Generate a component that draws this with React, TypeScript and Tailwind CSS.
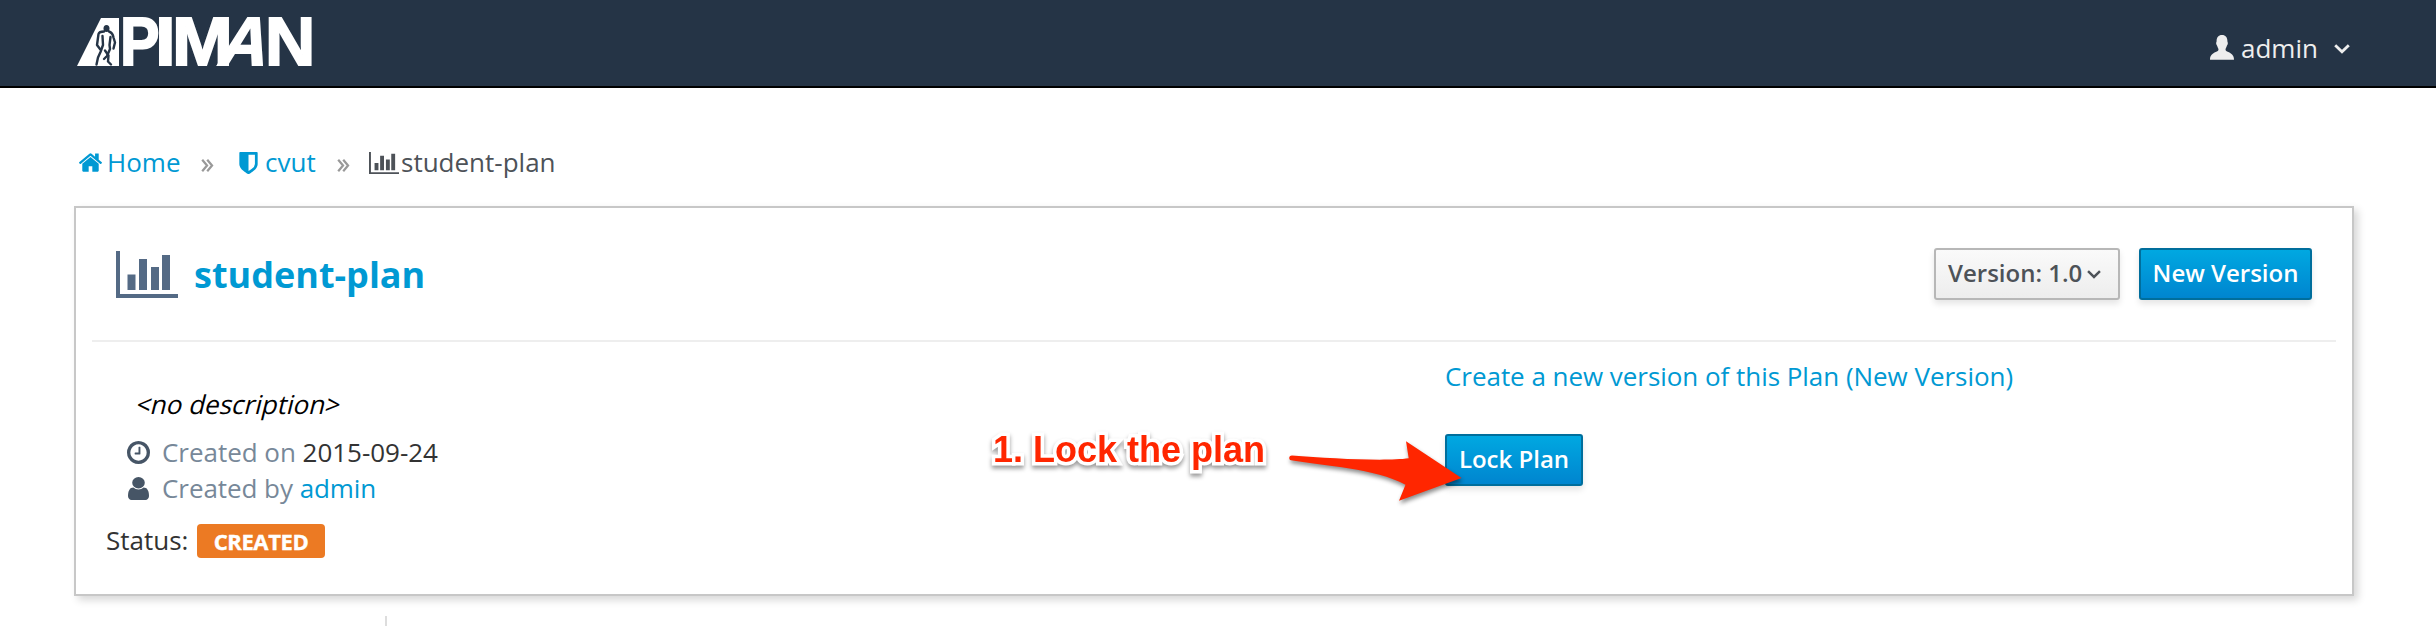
import React from "react";

function BarChart({ className }: { className: string }) {
  return (
    <svg className={className} viewBox="0 0 62 47" fill="currentColor" preserveAspectRatio="none">
      <path d="M0 0h4v43h58v4H0zM11.5 23.5h8v15.5h-8zM23 8h8v31h-8zM35 16h8v23h-8zM46 4h8v35h-8z" />
    </svg>
  );
}

function Home({ className }: { className: string }) {
  return (
    <svg className={className} viewBox="89 253 1614 1283" fill="currentColor">
      <path d="M1472 992v480q0 26-19 45t-45 19h-384v-384h-256v384h-384q-26 0-45-19t-19-45v-480q0-1 .5-3t.5-3l575-474 575 474q1 2 1 6zm223-69l-62 74q-8 9-21 11h-3q-13 0-21-7l-692-577-692 577q-12 8-24 7-13-2-21-11l-62-74q-8-10-7-23.5t11-21.5l719-599q32-26 76-26t76 26l244 204v-195q0-14 9-23t23-9h192q14 0 23 9t9 23v408l219 182q10 8 11 21.5t-7 23.5z" />
    </svg>
  );
}

function Shield({ className }: { className: string }) {
  return (
    <svg className={className} viewBox="256 128 1280 1536" fill="currentColor">
      <path d="M1344 960v-640h-448v1137q119-63 213-137 235-184 235-360zm192-768v768q0 86-33.5 170.5t-83 150-118 127.5-126.5 103-121 77.5-89.5 49.5-42.5 20q-12 6-26 6t-26-6q-16-7-42.5-20t-89.5-49.5-121-77.5-126.5-103-118-127.5-83-150-33.5-170.5v-768q0-26 19-45t45-19h1152q26 0 45 19t19 45z" />
    </svg>
  );
}

function Clock({ className }: { className: string }) {
  return (
    <svg className={className} viewBox="128 128 1536 1536" fill="currentColor">
      <path d="M1024 544v448q0 14-9 23t-23 9h-320q-14 0-23-9t-9-23v-64q0-14 9-23t23-9h224v-352q0-14 9-23t23-9h64q14 0 23 9t9 23zm416 352q0-148-73-273t-198-198-273-73-273 73-198 198-73 273 73 273 198 198 273 73 273-73 198-198 73-273zm224 0q0 209-103 385.5t-279.5 279.5-385.5 103-385.5-103-279.5-279.5-103-385.5 103-385.5 279.5-279.5 385.5-103 385.5 103 279.5 279.5 103 385.5z" />
    </svg>
  );
}

function User({ className }: { className: string }) {
  return (
    <svg className={className} viewBox="256 128 1280 1536" fill="currentColor" preserveAspectRatio="none">
      <path d="M1536 1399q0 109-62.5 187t-150.5 78h-854q-88 0-150.5-78t-62.5-187q0-85 8.5-160.5t31.5-152 58.5-131 94-89 134.5-34.5q131 128 313 128t313-128q76 0 134.5 34.5t94 89 58.5 131 31.5 152 8.5 160.5zm-256-887q0 159-112.5 271.5t-271.5 112.5-271.5-112.5-112.5-271.5 112.5-271.5 271.5-112.5 271.5 112.5 112.5 271.5z" />
    </svg>
  );
}

function Bust({ className }: { className: string }) {
  return (
    <svg className={className} viewBox="0 0 24 25" fill="currentColor">
      <path d="M12 0c3.6 0 5.4 2.6 5.4 6 0 1 .6 1.400.4 2.700-.2 1.200-.8 1.400-1 2.200-.4 1.700-1.300 2.300-1.300 3.400 0 1.500 1 2 2.800 2.800C21.500 18.600 24 20.200 24 24.800H0c0-4.600 2.500-6.200 5.700-7.700 1.800-.8 2.800-1.300 2.800-2.800 0-1.100-.9-1.700-1.300-3.400-.2-.8-.8-1-1-2.200C6 7.400 6.600 7 6.600 6 6.600 2.600 8.400 0 12 0z" />
    </svg>
  );
}

function Chevron({ className }: { className: string }) {
  return (
    <svg className={className} viewBox="0 0 16 10" fill="none" stroke="currentColor" strokeWidth="2.800" preserveAspectRatio="none">
      <path d="M1.200 1.200 8 7.800 14.800 1.200" />
    </svg>
  );
}

function Separator({ className }: { className: string }) {
  return (
    <svg className={className} viewBox="0 0 13 14" fill="none" stroke="currentColor" strokeWidth="2.400">
      <path d="M.8.8 6 7 .8 13.200M6.200.8l5.200 6.200-5.200 6.200" />
    </svg>
  );
}

function Logo() {
  return (
    <svg
      className="mt-[17px] h-[50px] w-[236px] overflow-visible"
      viewBox="0 0 236 50"
      fill="#fff"
      fontFamily="Liberation Sans, sans-serif"
      fontWeight="700"
      fontSize="69"
    >
      <path d="M0 49 24 1h18v48z" />
      <g fill="none" stroke="#253446" strokeWidth="2.400" strokeLinejoin="round" strokeLinecap="round">
        <path d="M27 14.500c-3 0-5 .5-5.500 2.500l-1.500 11 3 4" />
        <path d="M32 14.500c3 1 4 3 4.500 6l1.500 5-1.500 6" />
        <path d="M25.500 19l.5 9-2.500 7-2.500 5.500-1.500 7" />
        <path d="M33.500 20l-1 8 .5 4-3 7-3 3" />
        <path d="M28 33.500l3.500 5-.5 6 3 3" />
      </g>
      <ellipse cx="29.500" cy="11.500" rx="3" ry="3.600" fill="#253446" />
      <g stroke="#fff" strokeWidth="1.800">
        <text x="0" y="0" transform="translate(43 48.200) scale(.86 .99)">P</text>
        <text x="0" y="0" transform="translate(78 48.200) scale(1.080 .99)">I</text>
        <text x="0" y="0" transform="translate(95 48.200) scale(1.060 .99)">M</text>
        <text x="0" y="0" transform="translate(139 48.200) skewX(-16) scale(.96 .99)">A</text>
        <text x="0" y="0" transform="translate(188 48.200) scale(1.010 .99)">N</text>
      </g>
    </svg>
  );
}

export default function App() {
  return (
    <div className="relative flex h-[626px] w-[2436px] flex-col overflow-hidden bg-white font-['Open_Sans',sans-serif] text-[26px] leading-[36px] text-[#333]">
      <header className="flex h-[88px] shrink-0 justify-between border-b-2 border-black bg-[#253446] pr-[86px] pl-[77px]">
        <Logo />
        <div className="flex items-start pt-[30px] text-[#eee]">
          <Bust className="mt-[5px] mr-[7px] h-[25px] w-6" />
          <span className="w-[93px]">admin</span>
          <Chevron className="mt-[14px] h-[10px] w-4" />
        </div>
      </header>

      <nav className="flex h-[118px] shrink-0 items-start pt-[56px] pl-[79px] whitespace-nowrap text-[#4d5258]">
        <a className="flex w-[122px] text-[#0099d3]">
          <Home className="mt-[9px] mr-[5px] h-[19px] w-[23px]" />
          Home
        </a>
        <Separator className="mt-[15px] mr-[25px] h-[13px] w-[13px] text-[#999]" />
        <a className="flex w-[98px] text-[#0099d3]">
          <Shield className="mt-[8px] mr-[7px] h-[22px] w-[19px]" />
          cvut
        </a>
        <Separator className="mt-[15px] mr-[19px] h-[13px] w-[13px] text-[#999]" />
        <span className="flex">
          <BarChart className="mt-[8px] mr-[2px] h-[22px] w-[30px]" />
          student-plan
        </span>
      </nav>

      <main className="ml-[74px] flex h-[390px] w-[2280px] shrink-0 flex-col border-2 border-[#c7c7c7] px-4 shadow-[4px_4px_8px_rgba(0,0,0,0.16)]">
        <div className="flex h-[134px] shrink-0 justify-between border-b-2 border-[#eee] pt-10 pr-6 pl-6">
          <div className="flex">
            <BarChart className="mt-[3px] mr-4 h-[47px] w-[62px] text-[#546a85]" />
            <h1 className="pt-[2px] text-[36px] leading-[50px] font-bold text-[#0099d3]">student-plan</h1>
          </div>
          <div className="flex gap-[19px] text-[24px] font-semibold whitespace-nowrap">
            <button className="flex h-[52px] w-[186px] rounded-[3px] border-2 border-[#b7b7b7] bg-linear-to-b from-[#fafafa] to-[#ededed] pt-[5px] pl-3 text-[#4d5258] shadow-[0_4px_6px_rgba(0,0,0,0.1)]">
              <span className="w-[139px] text-left">Version: 1.0</span>
              <Chevron className="mt-[15px] h-[9px] w-[14px]" />
            </button>
            <button className="h-[52px] w-[173px] rounded-[3px] border-2 border-[#006e9c] bg-linear-to-b from-[#00a8e1] to-[#0085cf] pb-[2px] text-white shadow-[0_4px_6px_rgba(0,0,0,0.1)]">
              New Version
            </button>
          </div>
        </div>

        <div className="flex">
          <div className="flex w-[1353px] flex-col items-start pt-[44px] pl-[14px]">
            <p className="ml-[31px] -skew-x-14 text-black">&lt;no description&gt;</p>
            <div className="mt-3 flex pl-[21px]">
              <Clock className="mt-[7px] mr-3 h-[23px] w-[23px] text-[#465566]" />
              <p className="tracking-[-0.03px]">
                <span className="text-[#778899]">Created on</span> 2015-09-24
              </p>
            </div>
            <div className="flex pl-[22px]">
              <User className="mt-[7px] mr-[13px] h-[23px] w-[21px] text-[#465566]" />
              <p className="tracking-[-0.06px]">
                <span className="text-[#778899]">Created by</span> <a className="text-[#0099d3]">admin</a>
              </p>
            </div>
            <div className="mt-4 flex">
              <span className="w-[91px]">Status:</span>
              <span className="mt-[2px] flex h-[34px] w-[128px] justify-center rounded-[4px] bg-[#ec7a23] text-[22px] leading-[35px] font-bold tracking-[-0.4px] text-white [-webkit-text-stroke:0.4px_white]">
                CREATED
              </span>
            </div>
          </div>
          <div className="flex flex-col items-start pt-4">
            <a className="tracking-[-0.04px] text-[#0099d3]">Create a new version of this Plan (New Version)</a>
            <button className="mt-10 h-[52px] w-[138px] rounded-[3px] border-2 border-[#006e9c] bg-linear-to-b from-[#00a8e1] to-[#0085cf] pb-[2px] text-[24px] font-semibold text-white shadow-[0_4px_6px_rgba(0,0,0,0.1)]">
              Lock Plan
            </button>
          </div>
        </div>
      </main>

      <div className="mt-5 ml-[385px] h-[10px] w-[2px] bg-[#ddd]" />

      <p className="absolute top-[429px] left-[993px] font-['Liberation_Sans',Arial,sans-serif] text-[36px] leading-[42px] font-bold whitespace-nowrap text-[#ff2600] drop-shadow-[0_3px_2px_rgba(0,0,0,0.4)] [-webkit-text-stroke:7px_white] [paint-order:stroke_fill]">
        1. Lock the plan
      </p>
      <svg className="absolute top-[430px] left-[1280px] h-[80px] w-[200px] overflow-visible drop-shadow-[1px_3px_2px_rgba(0,0,0,0.45)]" viewBox="1280 430 200 80" fill="#ff2600">
        <path d="M1292 455.500C1330 458.500 1385 461.500 1408.700 458.300L1406 441.300 1461.500 478 1399 500.700 1405.500 484.700C1375 468.500 1325 466 1291 460.300 1288.500 459.500 1288.500 455.500 1292 455.500z" />
      </svg>
    </div>
  );
}
